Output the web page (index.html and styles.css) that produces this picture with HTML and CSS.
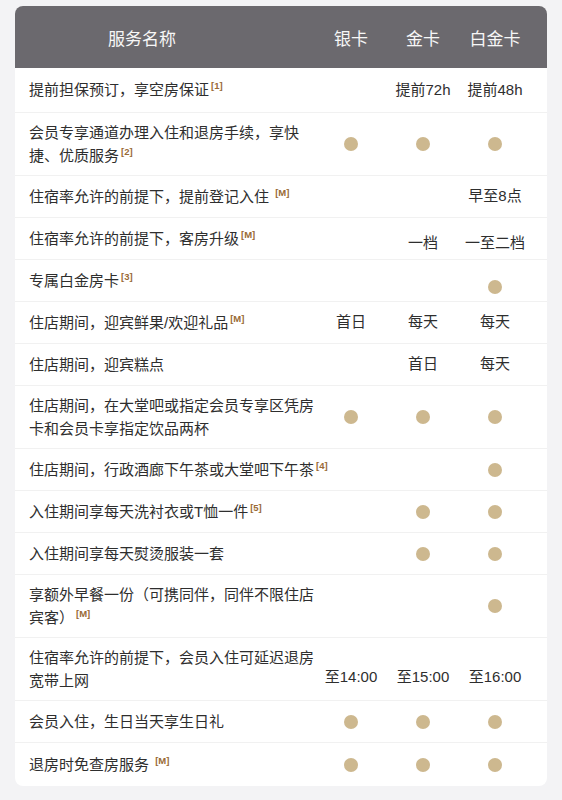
FILE: index.html
```html
<!DOCTYPE html>
<html lang="zh">
<head>
<meta charset="utf-8">
<link rel="stylesheet" href="styles.css">
</head>
<body>
<div class="card">
  <div class="head">
    <div class="h-name">服务名称</div>
    <div class="h-col">银卡</div>
    <div class="h-col">金卡</div>
    <div class="h-col">白金卡</div>
  </div>
  <div class="row first">
    <div class="name">提前担保预订，享空房保证<sup class="note">[1]</sup></div>
    <div class="v"></div>
    <div class="v">提前72h</div>
    <div class="v">提前48h</div>
  </div>
  <div class="row">
    <div class="name">会员专享通道办理入住和退房手续，享快捷、优质服务<sup class="note">[2]</sup></div>
    <div class="v"><span class="dot"></span></div>
    <div class="v"><span class="dot"></span></div>
    <div class="v"><span class="dot"></span></div>
  </div>
  <div class="row">
    <div class="name">住宿率允许的前提下，提前登记入住 <sup class="note">[M]</sup></div>
    <div class="v"></div>
    <div class="v"></div>
    <div class="v">早至8点</div>
  </div>
  <div class="row">
    <div class="name">住宿率允许的前提下，客房升级<sup class="note">[M]</sup></div>
    <div class="v"></div>
    <div class="v low">一档</div>
    <div class="v low">一至二档</div>
  </div>
  <div class="row">
    <div class="name">专属白金房卡<sup class="note">[3]</sup></div>
    <div class="v"></div>
    <div class="v"></div>
    <div class="v lower"><span class="dot"></span></div>
  </div>
  <div class="row">
    <div class="name">住店期间，迎宾鲜果/欢迎礼品<sup class="note">[M]</sup></div>
    <div class="v">首日</div>
    <div class="v">每天</div>
    <div class="v">每天</div>
  </div>
  <div class="row">
    <div class="name">住店期间，迎宾糕点</div>
    <div class="v"></div>
    <div class="v">首日</div>
    <div class="v">每天</div>
  </div>
  <div class="row">
    <div class="name">住店期间，在大堂吧或指定会员专享区凭房卡和会员卡享指定饮品两杯</div>
    <div class="v"><span class="dot"></span></div>
    <div class="v"><span class="dot"></span></div>
    <div class="v"><span class="dot"></span></div>
  </div>
  <div class="row">
    <div class="name">住店期间，行政酒廊下午茶或大堂吧下午茶<sup class="note">[4]</sup></div>
    <div class="v"></div>
    <div class="v"></div>
    <div class="v"><span class="dot"></span></div>
  </div>
  <div class="row">
    <div class="name">入住期间享每天洗衬衣或T恤一件<sup class="note">[5]</sup></div>
    <div class="v"></div>
    <div class="v"><span class="dot"></span></div>
    <div class="v"><span class="dot"></span></div>
  </div>
  <div class="row">
    <div class="name">入住期间享每天熨烫服装一套</div>
    <div class="v"></div>
    <div class="v"><span class="dot"></span></div>
    <div class="v"><span class="dot"></span></div>
  </div>
  <div class="row">
    <div class="name">享额外早餐一份（可携同伴，同伴不限住店宾客）<sup class="note">[M]</sup></div>
    <div class="v"></div>
    <div class="v"></div>
    <div class="v"><span class="dot"></span></div>
  </div>
  <div class="row">
    <div class="name">住宿率允许的前提下，会员入住可延迟退房宽带上网</div>
    <div class="v lowest">至14:00</div>
    <div class="v lowest">至15:00</div>
    <div class="v lowest">至16:00</div>
  </div>
  <div class="row">
    <div class="name">会员入住，生日当天享生日礼</div>
    <div class="v"><span class="dot"></span></div>
    <div class="v"><span class="dot"></span></div>
    <div class="v"><span class="dot"></span></div>
  </div>
  <div class="row last">
    <div class="name">退房时免查房服务 <sup class="note">[M]</sup></div>
    <div class="v"><span class="dot"></span></div>
    <div class="v"><span class="dot"></span></div>
    <div class="v"><span class="dot"></span></div>
  </div>
</div>
</body>
</html>
```
FILE: styles.css
```css
html, body {
  margin: 0;
  padding: 0;
  background: #f3f3f5;
}
body {
  font-family: "Liberation Sans", "Noto Sans CJK SC", sans-serif;
  color: #2e2e2e;
  padding: 6px 15px 0 15px;
  height: 800px;
  box-sizing: border-box;
}
.card {
  background: #ffffff;
  border-radius: 8px;
  overflow: hidden;
}
.head, .row {
  display: grid;
  grid-template-columns: 286px 72px 72px 72px;
  padding: 0 16px 0 14px;
  align-items: center;
}
.head {
  background: #6b696e;
  color: #f7f7f7;
  height: 62px;
  font-size: 17px;
}
.h-name {
  text-align: center;
  padding-right: 60px;
}
.h-col {
  text-align: center;
}
.row {
  font-size: 15px;
  line-height: 22.5px;
  border-bottom: 1px solid #f1f1f1;
  min-height: 41px;
}
.row.first {
  min-height: 44px;
}
.row.last {
  border-bottom: none;
  min-height: 43px;
}
.name {
  padding: 9px 0 8px;
  margin-right: -13px;
}
.v {
  text-align: center;
  display: flex;
  justify-content: center;
  align-items: center;
  white-space: nowrap;
}
.v.low {
  padding-top: 9px;
}
.v.lower {
  padding-top: 12px;
}
.v.lowest {
  padding-top: 16px;
}
.note {
  font-family: "Liberation Sans", sans-serif;
  font-weight: 700;
  font-size: 9.5px;
  color: #9a6a36;
  vertical-align: 6px;
  margin-left: 2px;
  line-height: 0;
}
.dot {
  display: block;
  width: 14px;
  height: 14px;
  border-radius: 50%;
  background: #cdb88f;
}
```
